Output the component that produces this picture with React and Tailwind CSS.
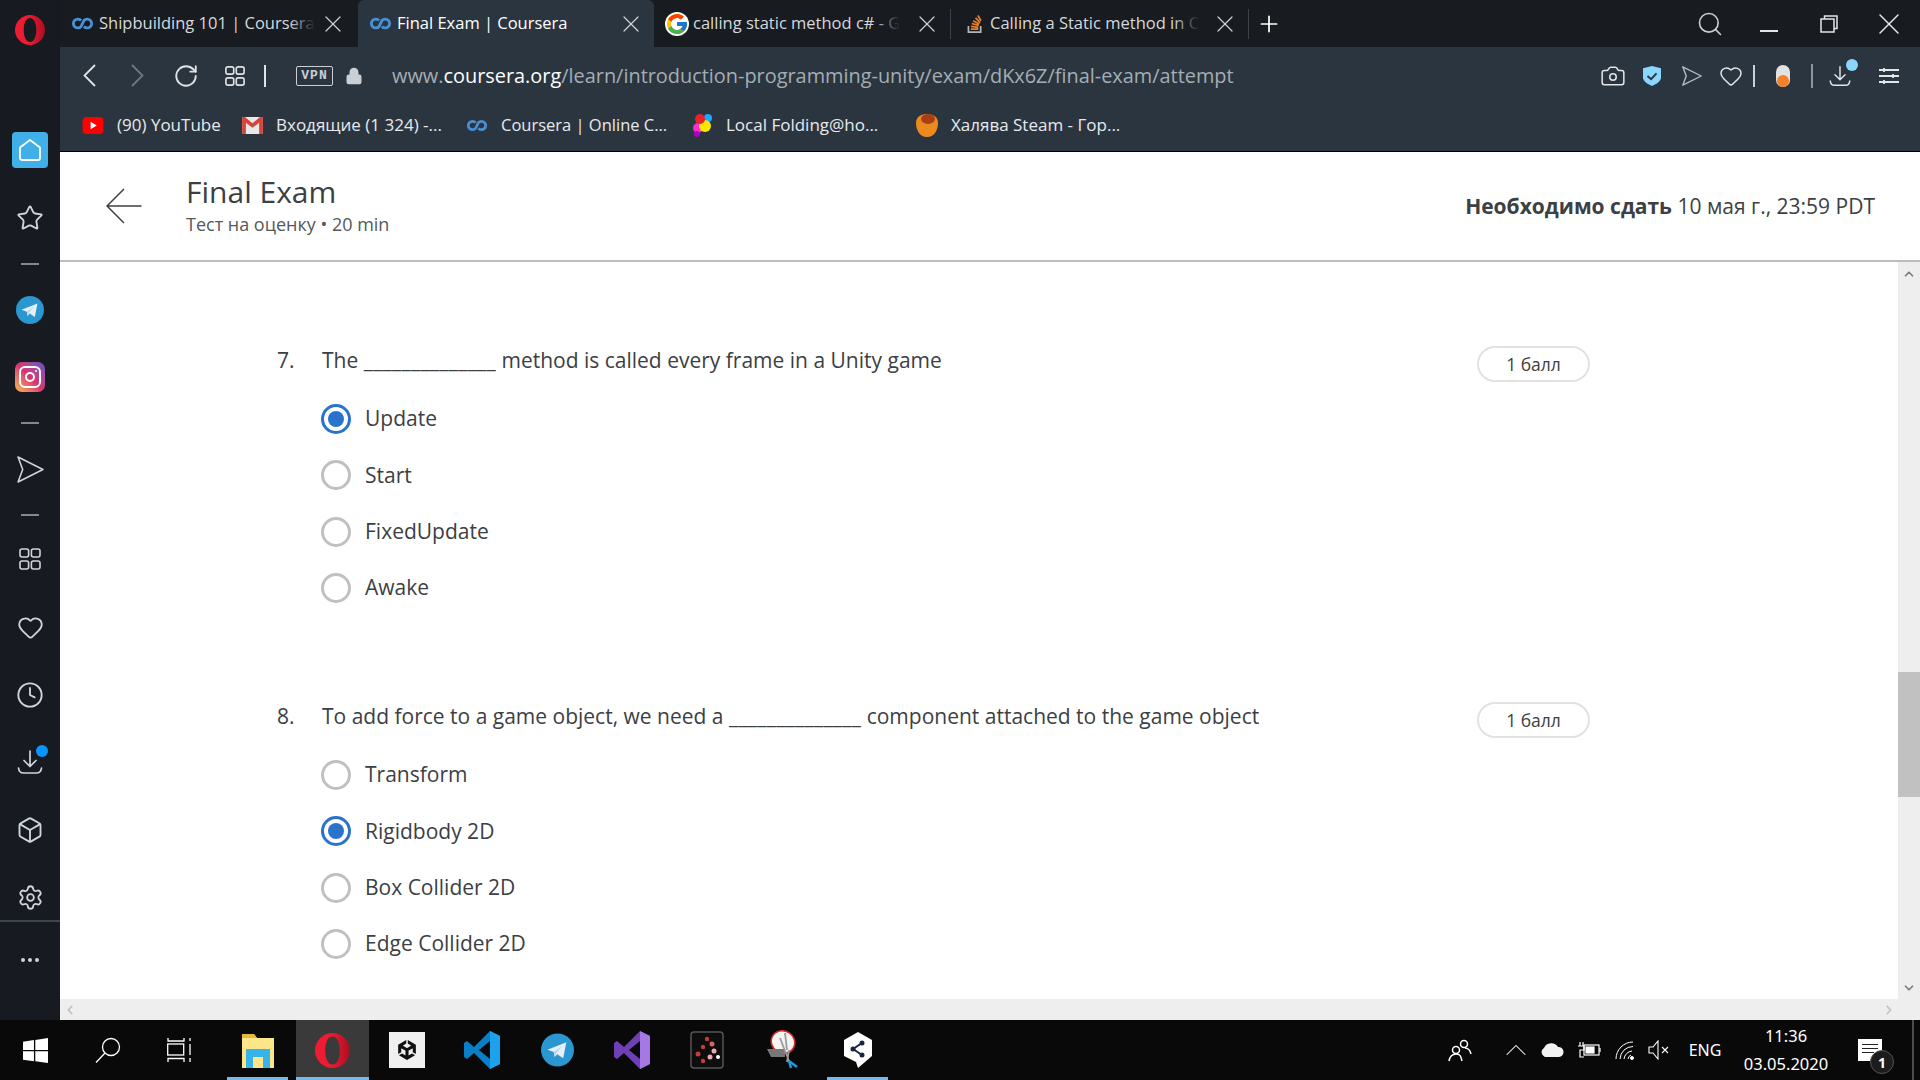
import React from 'react';
import { Search, X, Plus, RotateCw, Lock, Camera, Heart, Settings, Box, Clock, Star, ChevronUp, ChevronDown, ChevronLeft, ChevronRight, MoreHorizontal } from 'lucide-react';
import { FcGoogle } from 'react-icons/fc';
import { SiUnity } from 'react-icons/si';

const Co = ({ className }) => (
  <svg viewBox="0 0 24 13" className={className} fill="none" stroke="#4b8fd3" strokeWidth="3">
    <path d="M10.5 3.4A4.6 4.6 0 1 0 10.5 9.6L13.5 3.4A4.6 4.6 0 1 1 13.5 9.6" />
  </svg>
);
const GridIcon = ({ className, sw = 1.6 }) => (
  <svg viewBox="0 0 22 22" className={className} fill="none" stroke="currentColor" strokeWidth={sw}>
    <rect x="1" y="1" width="8.6" height="8" rx="2" /><rect x="12.4" y="1" width="8.6" height="8" rx="2" />
    <rect x="1" y="13" width="8.6" height="8" rx="2" /><rect x="12.4" y="13" width="8.6" height="8" rx="2" />
  </svg>
);
const SendIcon = ({ className, sw = 1.5 }) => (
  <svg viewBox="0 0 26 26" className={className} fill="none" stroke="currentColor" strokeWidth={sw} strokeLinejoin="round">
    <path d="M1 1L25 13L1 25L5.5 13Z" />
  </svg>
);
const DownloadTray = ({ className, sw = 1.7 }) => (
  <svg viewBox="0 0 26 26" className={className} fill="none" stroke="currentColor" strokeWidth={sw} strokeLinecap="round" strokeLinejoin="round">
    <path d="M13 2V17M7 11.5L13 17.5L19 11.5M1.5 19C2 23 4 24 6.5 24H19.5C22 24 24 23 24.5 19" />
  </svg>
);
const Opera = ({ className }) => (
  <svg viewBox="0 0 30 30" className={className}>
    <defs><linearGradient id="opera-red" x1="0" x2="1" y1="0" y2="0"><stop offset="0.45" stopColor="#ee1c32" /><stop offset="1" stopColor="#a80f22" /></linearGradient></defs>
    <path fillRule="evenodd" fill="url(#opera-red)" d="M15 0C23 0 30 6.7 30 15S23 30 15 30 0 23.3 0 15 7 0 15 0ZM15 3C11 3 8.7 8.3 8.7 15S11 27 15 27 21.3 21.7 21.3 15 19 3 15 3Z" />
  </svg>
);
const Tg = ({ className }) => (
  <svg viewBox="0 0 28 28" className={className}>
    <circle cx="14" cy="14" r="14" fill="#2a97d0" />
    <path d="M5.5 13.8L21.5 7.5L18.8 21L13.8 17.5L11.5 20L10.8 15.7Z" fill="#e4f1f8" />
    <path d="M10.8 15.7L18 10.5L13 16.5L11.5 20Z" fill="#b5d6e8" />
  </svg>
);
const Close = () => <X className="w-[28px] h-[28px] -mx-[4px] shrink-0 text-[#c9cfd4]" strokeWidth={1.1} />;

const Tab = ({ icon, text, active, className, fade }) => (
  <div className={`flex items-center ${className} ${active ? 'bg-[#2b3540] rounded-t-[6px]' : ''}`}>
    {icon}
    <div className={`whitespace-nowrap flex-1 text-[16.5px] ${active ? 'text-white' : 'text-[#d5d9dd]'}`}>
      <span className="relative inline-block">
        {text}
        {fade && <span className="absolute inset-y-0 right-0 w-[26px] bg-gradient-to-r from-transparent to-[#181b20]" />}
      </span>
    </div>
    <Close />
  </div>
);

const Radio = ({ on }) => (
  <div className={`w-[30px] h-[30px] rounded-full border-[3px] flex items-center justify-center ${on ? 'border-[#2a73cc]' : 'border-[#c0c0c0]'}`}>
    {on && <div className="w-[16px] h-[16px] rounded-full bg-[#2a73cc]" />}
  </div>
);
const Option = ({ on, text }) => (
  <div className="flex items-center h-[56.33px] pl-[44px] gap-[14px] text-[21px] text-[#3c4043]">
    <Radio on={on} /><span>{text}</span>
  </div>
);
const Blank = () => <span className="tracking-[0.25px]">______________</span>;
const Question = ({ n, q, opts, on, className }) => (
  <div className={className}>
    <div className="flex items-center h-[36px] text-[21px] text-[#3c4043]">
      <div className="w-[45px]">{n}.</div>
      <div className="flex-1">{q}</div>
      <div className="w-[113px] h-[36px] mt-[7px] rounded-full border-2 border-[#e2e2e2] flex items-center justify-center text-[17.5px]">1 балл</div>
    </div>
    <div className="mt-[12.5px]">
      {opts.map((o) => <Option key={o} text={o} on={o === on} />)}
    </div>
  </div>
);
const Dash = () => <div className="w-[18px] h-[2px] bg-[#7d8a96]" />;
const Side = ({ className, children }) => <div className={`w-full flex items-center justify-center relative ${className}`}>{children}</div>;

export default function App() {
  return (
    <div className="w-[1920px] h-[1080px] flex flex-col overflow-hidden bg-white" style={{ fontFamily: '"Open Sans", sans-serif' }}>
      <div className="flex h-[1020px]">
        {/* sidebar */}
        <aside className="w-[60px] shrink-0 bg-[#171b21] flex flex-col text-[#cfd6db]">
          <Side className="h-[60px]"><Opera className="w-[30px] h-[30px]" /></Side>
          <Side className="h-[56px]" />
          <Side className="h-[68px]">
            <div className="w-[36px] h-[36px] rounded-[4px] bg-[#41b0e8] flex items-center justify-center">
              <svg viewBox="0 0 24 24" className="w-[24px] h-[24px]" fill="none" stroke="#fff" strokeWidth="1.8" strokeLinejoin="round"><path d="M12 2L22 9.5V20A2 2 0 0 1 20 22H4A2 2 0 0 1 2 20V9.5Z" /></svg>
            </div>
          </Side>
          <Side className="h-[68px]"><Star className="w-[28px] h-[28px]" strokeWidth={1.6} /></Side>
          <Side className="h-[24px]"><Dash /></Side>
          <Side className="h-[68px]"><Tg className="w-[28px] h-[28px]" /></Side>
          <Side className="h-[66px]">
            <div className="w-[30px] h-[30px] rounded-[7px] bg-gradient-to-tr from-[#f5b84a] via-[#d9306f] to-[#5b4bc4] flex items-center justify-center">
              <div className="w-[22px] h-[22px] rounded-[6px] border-2 border-white flex items-center justify-center relative">
                <div className="w-[10px] h-[10px] rounded-full border-2 border-white" />
                <div className="absolute top-[2px] right-[2px] w-[2px] h-[2px] bg-white rounded-full" />
              </div>
            </div>
          </Side>
          <Side className="h-[26px]"><Dash /></Side>
          <Side className="h-[66px]"><SendIcon className="w-[27px] h-[27px]" /></Side>
          <Side className="h-[26px]"><Dash /></Side>
          <Side className="h-[62px]"><GridIcon className="w-[24px] h-[22px]" /></Side>
          <Side className="h-[74px]"><Heart className="w-[27px] h-[27px]" strokeWidth={1.6} /></Side>
          <Side className="h-[62px]"><Clock className="w-[28px] h-[28px]" strokeWidth={1.6} /></Side>
          <Side className="h-[72px]">
            <DownloadTray className="w-[26px] h-[26px]" />
            <div className="absolute top-[19px] left-[36px] w-[12px] h-[12px] rounded-full bg-[#0a94ff]" />
          </Side>
          <Side className="h-[64px]"><Box className="w-[28px] h-[28px]" strokeWidth={1.6} /></Side>
          <Side className="h-[58px] pt-[13px]"><Settings className="w-[27px] h-[27px]" strokeWidth={1.6} /></Side>
          <div className="h-[2px] bg-[#3c4650]" />
          <Side className="h-[76px]"><MoreHorizontal className="w-[24px] h-[24px]" strokeWidth={2} /></Side>
        </aside>

        <div className="flex-1 flex flex-col min-w-0">
          {/* tabs */}
          <div className="h-[47px] bg-[#181b20] flex items-center text-[#d5d9dd]">
            <Tab fade className="h-full w-[298px] pl-[11px] pr-[15px]" text="Shipbuilding 101 | Coursera" icon={<Co className="w-[23px] h-[13px] mr-[5px] shrink-0" />} />
            <Tab active className="h-full w-[296px] pl-[11px] pr-[13px]" text="Final Exam | Coursera" icon={<Co className="w-[23px] h-[13px] mr-[5px] shrink-0" />} />
            <Tab fade className="h-[30px] w-[297px] pl-[11px] pr-[13px] border-r border-[#3c4249]" text="calling static method c# - G" icon={<FcGoogle className="w-[24px] h-[24px] mr-[4px] shrink-0 bg-white rounded-full" />} />
            <Tab fade className="h-[30px] w-[298px] pl-[16px] pr-[13px] border-r border-[#3c4249]" text="Calling a Static method in C" icon={
              <svg viewBox="0 0 18 20" className="w-[17px] h-[20px] mr-[6px] shrink-0" fill="none" strokeWidth="1.8"><path d="M1.5 12V18.5H14.5V12" stroke="#b9b6b2" /><path d="M4 15.5H12M4.3 12.5L12 13.5M5 9.5L12.5 11.5M6.5 6.5L13 10M9 3.5L14 8.5M11.5 1L14.8 6.5" stroke="#e8812c" /></svg>
            } />
            <Plus className="ml-[7px] w-[26px] h-[26px] text-white" strokeWidth={1.6} />
            <div className="flex-1" />
            <Search className="w-[28px] h-[28px] text-[#c9cfd4] mr-[36px]" strokeWidth={1.4} />
            <div className="w-[18px] h-[2px] bg-[#e3e6e8] mt-[14px] mr-[42px]" />
            <svg viewBox="0 0 18 18" className="w-[18px] h-[18px] mr-[33px]" fill="none" stroke="#e3e6e8" strokeWidth="1.5"><rect x="1" y="4" width="13" height="13" /><path d="M4.5 4V1H17V13.5H14" /></svg>
            <X className="w-[36px] h-[36px] text-[#e3e6e8] mr-[13px]" strokeWidth={1} />
          </div>

          {/* toolbar */}
          <div className="h-[105px] shrink-0 bg-[#2b3540] border-b border-black">
            <div className="h-[57px] flex items-center text-[#dfe3e6]">
              <svg viewBox="0 0 13 23" className="ml-[23px] w-[13px] h-[23px]" fill="none" stroke="currentColor" strokeWidth="1.8"><path d="M12 1L1.5 11.5L12 22" /></svg>
              <svg viewBox="0 0 13 23" className="ml-[35px] w-[13px] h-[23px] text-[#6d7780]" fill="none" stroke="currentColor" strokeWidth="1.8"><path d="M1 1L11.5 11.5L1 22" /></svg>
              <RotateCw className="ml-[29px] w-[26px] h-[26px]" strokeWidth={1.7} />
              <GridIcon className="ml-[25px] w-[22px] h-[20px]" sw={1.8} />
              <div className="ml-[18px] w-[2px] h-[22px] bg-[#dfe3e6]" />
              <div className="ml-[30px] w-[37px] h-[20px] border border-[#c9cfd4] rounded-[2px] flex items-center justify-center text-[13px] font-bold tracking-[1px] text-[#c9cfd4]" style={{ fontFamily: '"Liberation Mono", monospace' }}>VPN</div>
              <Lock className="ml-[12px] w-[18px] h-[20px] text-[#c9cfd4] fill-[#c9cfd4]" strokeWidth={2} />
              <div className="ml-[29px] text-[19.9px] text-[#a5adb4] whitespace-nowrap">www.<span className="text-white">coursera.org</span>/learn/introduction-programming-unity/exam/dKx6Z/final-exam/attempt</div>
              <div className="flex-1" />
              <Camera className="w-[26px] h-[26px] mr-[17px] text-[#e3e6e8]" strokeWidth={1.4} />
              <svg viewBox="0 0 20 22" className="w-[18px] h-[22px] mr-[20px]"><path d="M10 0L20 2.5V13C20 17 14 20.5 10 22C6 20.5 0 17 0 13V2.5Z" fill="#8ad6ff" /><path d="M5 11L9 14.5L15 8" fill="none" stroke="#2b3540" strokeWidth="2.2" /></svg>
              <SendIcon className="w-[22px] h-[20px] mr-[16px] text-[#b4bbc1]" sw={1.8} />
              <Heart className="w-[24px] h-[24px] mr-[10px] text-[#e3e6e8]" strokeWidth={1.5} />
              <div className="w-[2px] h-[22px] bg-[#c9cfd4] mr-[21px]" />
              <div className="w-[14px] h-[22px] rounded-full bg-[#e2e2e2] flex items-end justify-center mr-[21px]"><div className="w-[12px] h-[12px] rounded-full bg-[#f58028]" /></div>
              <div className="w-[2px] h-[24px] bg-[#8f979e] mr-[14px]" />
              <div className="relative mr-[26px]">
                <DownloadTray className="w-[22px] h-[22px] m-[2px] text-[#e3e6e8]" />
                <div className="absolute -top-[4px] -right-[5px] w-[12px] h-[12px] rounded-full bg-[#8ad6ff]" />
              </div>
              <svg viewBox="0 0 20 18" className="w-[20px] h-[18px] mr-[21px]" fill="none" stroke="#e3e6e8" strokeWidth="1.8"><path d="M0 3H20M0 9H20M0 15H20" /><path d="M5 1V5M14 7V11M5 13V17" /></svg>
            </div>
            {/* bookmarks */}
            <div className="h-[42px] flex items-center text-[17px] text-[#e7eaec] whitespace-nowrap">
              <svg viewBox="0 0 22 18" className="ml-[22px] w-[22px] h-[17px]"><rect width="22" height="18" rx="4" fill="#f00" /><path d="M8.5 5L15 9L8.5 13Z" fill="#fff" /></svg>
              <span className="ml-[13px] w-[125px]">(90) YouTube</span>
              <svg viewBox="0 0 22 18" className="w-[21px] h-[17px]"><rect width="22" height="18" fill="#e8e8e8" /><path d="M0 0V18H4V6L11 11.5L18 6V18H22V0H19L11 6.5L3 0Z" fill="#d64539" /></svg>
              <span className="ml-[13px] w-[190px]">Входящие (1 324) -...</span>
              <Co className="w-[22px] h-[13px]" />
              <span className="ml-[13px] w-[191px] text-[16.5px]">Coursera | Online C...</span>
              <svg viewBox="0 0 22 24" className="w-[22px] h-[24px]"><circle cx="6" cy="15" r="5" fill="#ff2bd0" /><circle cx="16" cy="5" r="4" fill="#19a8ff" /><circle cx="13" cy="13" r="6" fill="#ffe600" /><circle cx="8" cy="6" r="5" fill="#e8232a" /><circle cx="5" cy="21" r="3" fill="#b000c8" /></svg>
              <span className="ml-[12px] w-[189px]">Local Folding@ho...</span>
              <svg viewBox="0 0 24 24" className="w-[24px] h-[24px]"><path d="M1 10C1 3 7 1 12 1S23 3 23 10C23 16 20 24 12 24S1 16 1 10Z" fill="#ec8a1f" /><ellipse cx="13" cy="6" rx="7" ry="5" fill="#a83f14" /></svg>
              <span className="ml-[12px]">Халява Steam - Гор...</span>
            </div>
          </div>

          {/* page header */}
          <header className="h-[110px] shrink-0 border-b-2 border-[#bdbdbd] flex items-center text-[#3c4043]">
            <svg viewBox="0 0 36 36" className="ml-[46px] w-[36px] h-[36px]" fill="none" stroke="#3c4043" strokeWidth="1.5"><path d="M35.5 18H1M18 1L1 18L18 35" /></svg>
            <div className="ml-[44px]">
              <div className="text-[30px] leading-[36px]">Final Exam</div>
              <div className="text-[18px] leading-[28px] text-[#55585b]">Тест на оценку • 20 min</div>
            </div>
            <div className="flex-1" />
            <div className="mr-[45px] pt-[2px] text-[21px]"><b className="font-bold">Необходимо сдать</b> 10 мая г., 23:59 PDT</div>
          </header>

          {/* scrolling page */}
          <div className="flex-1 flex min-h-0">
            <main className="flex-1 pl-[217px] pr-[308px] pt-[80.5px] overflow-hidden">
              <Question n={7} q={<>The <Blank /> method is called every frame in a Unity game</>} on="Update" opts={['Update', 'Start', 'FixedUpdate', 'Awake']} />
              <Question className="mt-[82px]" n={8} q={<>To add force to a game object, we need a <Blank /> component attached to the game object</>} on="Rigidbody 2D" opts={['Transform', 'Rigidbody 2D', 'Box Collider 2D', 'Edge Collider 2D']} />
            </main>
            <div className="w-[22px] bg-[#eeeeee] flex flex-col text-[#7c7c7c]">
              <ChevronUp className="w-[14px] h-[14px] mx-auto mt-[5px]" strokeWidth={3} />
              <div className="h-[391px]" />
              <div className="h-[125px] bg-[#c1c1c1]" />
              <div className="flex-1" />
              <ChevronDown className="w-[14px] h-[14px] mx-auto mb-[4px]" strokeWidth={3} />
            </div>
          </div>
          <div className="h-[21px] shrink-0 bg-[#eeeeee] flex items-center justify-between px-[3px] text-[#c0c0c0]">
            <ChevronLeft className="w-[14px] h-[14px]" strokeWidth={3} />
            <ChevronRight className="w-[14px] h-[14px] mr-[21px]" strokeWidth={3} />
          </div>
        </div>
      </div>

      {/* taskbar */}
      <footer className="h-[60px] bg-[#090909] flex items-center text-white">
        <div className="w-[70px] h-full flex items-center justify-center">
          <svg viewBox="0 0 24 24" className="w-[25px] h-[25px]" fill="#fff"><path d="M0 3.5L10.5 2V11.5H0ZM11.8 1.8L24 0V11.5H11.8ZM0 12.8H10.5V22.3L0 20.8ZM11.8 12.8H24V24L11.8 22.3Z" /></svg>
        </div>
        <div className="w-[76px] h-full flex items-center justify-center">
          <svg viewBox="0 0 26 26" className="w-[26px] h-[26px]" fill="none" stroke="#fff" strokeWidth="1.3"><circle cx="16" cy="10" r="8.5" /><path d="M10 16L1 25.5" /></svg>
        </div>
        <div className="w-[68px] h-full flex items-center justify-center">
          <svg viewBox="0 0 26 26" className="w-[26px] h-[26px]" fill="none" stroke="#fff" strokeWidth="1.3"><rect x="0.7" y="7" width="16" height="11" /><path d="M1 1V4H17V1M1 25V21.5H17V25M23 1V4M23 7V18M23 21V25" /></svg>
        </div>
        <div className="ml-[13px] w-[61px] h-full flex items-center justify-center border-b-[3px] border-[#76b9ed] pt-[3px]">
          <svg viewBox="0 0 32 36" className="w-[32px] h-[36px]"><path d="M0 2H12L15 6H32V36H0Z" fill="#fde68a" /><path d="M0 2H12L15 6H0Z" fill="#e6b93c" /><path d="M4 17H28V36H21V25H11V36H4Z" fill="#37b3ea" /></svg>
        </div>
        <div className="ml-[8px] w-[73px] h-full flex items-center justify-center bg-[#3a3a3a] border-b-[3px] border-[#76b9ed] pt-[3px]">
          <Opera className="w-[35px] h-[35px]" />
        </div>
        <div className="w-[76px] h-full flex items-center justify-center">
          <div className="w-[36px] h-[36px] bg-[#f0f0f0] flex items-center justify-center">
            <SiUnity className="w-[20px] h-[20px] text-[#111]" />
          </div>
        </div>
        <div className="w-[74px] h-full flex items-center justify-center">
          <svg viewBox="0 0 36 38" className="w-[36px] h-[38px]"><path d="M26 0L36 5V33L26 38L10 22L3 28L0 26V12L3 10L10 16ZM26 10L15 19L26 28Z" fill="#0a7fc8" /><path d="M26 0L36 5V33L26 38Z" fill="#1ba1ee" /></svg>
        </div>
        <div className="w-[76px] h-full flex items-center justify-center"><Tg className="w-[33px] h-[36px]" /></div>
        <div className="w-[74px] h-full flex items-center justify-center">
          <svg viewBox="0 0 36 38" className="w-[36px] h-[38px]"><path d="M26 0L36 5V33L26 38L10 22L3 28L0 26V12L3 10L10 16ZM26 10L15 19L26 28Z" fill="#6f3fb5" /><path d="M26 0L36 5V33L26 38Z" fill="#a678e6" /></svg>
        </div>
        <div className="w-[76px] h-full flex items-center justify-center">
          <svg viewBox="0 0 34 38" className="w-[34px] h-[38px]"><rect x="1" y="1" width="32" height="36" rx="3" fill="#0d0d0d" stroke="#555" strokeWidth="1.5" /><circle cx="17" cy="8" r="2.2" fill="#c53a3a" /><circle cx="22" cy="13" r="2.5" fill="#d9606a" /><circle cx="13" cy="16" r="2.2" fill="#c53a3a" /><circle cx="24" cy="20" r="2.5" fill="#efa9b5" /><circle cx="8" cy="23" r="2.5" fill="#c53a3a" /><circle cx="20" cy="26" r="2.5" fill="#efa9b5" /><circle cx="13" cy="30" r="2.2" fill="#c53a3a" /><circle cx="28" cy="26" r="2" fill="#fff" /></svg>
        </div>
        <div className="w-[74px] h-full flex items-center justify-center">
          <svg viewBox="0 0 34 40" className="w-[34px] h-[40px]"><ellipse cx="18" cy="12" rx="12" ry="11" transform="rotate(30 18 12)" fill="#f4f4f4" stroke="#d92a2a" strokeWidth="1.5" /><path d="M2 19H20V27H6Z" fill="#777" /><path d="M20 3L22 20M15 8L24 31M24 20L22 32" stroke="#9a9a9a" strokeWidth="1.8" fill="none" /><path d="M24 31L26 38M24 31L32 37" stroke="#1f9ae0" strokeWidth="2.5" /></svg>
        </div>
        <div className="ml-[8px] w-[61px] h-full flex items-center justify-center border-b-[3px] border-[#76b9ed] pt-[3px]">
          <svg viewBox="0 0 28 36" className="w-[28px] h-[36px]"><path d="M14 0L28 8V24L14 36L12 30L0 24V8Z" fill="#fff" /><path d="M9 17L18 11M9 17L18 23" stroke="#16263c" strokeWidth="2" /><circle cx="9" cy="17" r="2.5" fill="#16263c" /><circle cx="18" cy="11" r="2.5" fill="#16263c" /><circle cx="18" cy="23" r="2.5" fill="#16263c" /></svg>
        </div>
        <div className="flex-1" />
        <div className="w-[56px] flex justify-center pr-[17px]">
          <svg viewBox="0 0 24 24" className="w-[24px] h-[24px]" fill="none" stroke="#fff" strokeWidth="1.5"><circle cx="16" cy="6" r="3.5" /><circle cx="8" cy="12" r="3.5" /><path d="M1 23C2 18 4 16 8 16S13 18 14 23M17 10C20 10 22 12 23 16" /></svg>
        </div>
        <div className="w-[40px] flex justify-center"><ChevronUp className="w-[36px] h-[36px]" strokeWidth={0.7} /></div>
        <div className="w-[32px] flex justify-center">
          <svg viewBox="0 0 24 14" className="w-[24px] h-[14px]"><path d="M5 14A5 5 0 0 1 4 5A8 8 0 0 1 18 4A5 5 0 0 1 19 14Z" fill="#f2f2f2" /></svg>
        </div>
        <div className="w-[42px] flex justify-center">
          <svg viewBox="0 0 24 16" className="w-[24px] h-[16px]" fill="none" stroke="#fff" strokeWidth="1.2"><rect x="7" y="3" width="15" height="10" /><rect x="9" y="5" width="8" height="6" fill="#fff" /><path d="M23 6V10M3 0V4M6 0V4M1 4H7V8H3V15H7" /></svg>
        </div>
        <div className="w-[30px] flex justify-center">
          <svg viewBox="0 0 20 20" className="w-[20px] h-[20px]" fill="none" stroke="#fff" strokeWidth="1"><path d="M1 19A17 17 0 0 1 18 2M5 19A13 13 0 0 1 18 6.5M9 19A9 9 0 0 1 17 11M13 19A5 5 0 0 1 16 15" /><circle cx="17" cy="18" r="1.5" fill="#fff" /></svg>
        </div>
        <div className="w-[38px] flex justify-center">
          <svg viewBox="0 0 22 20" className="w-[22px] h-[20px]" fill="none" stroke="#fff" strokeWidth="1.1"><path d="M1 7H5L10 1V19L5 13H1ZM14 7L20 13M20 7L14 13" /></svg>
        </div>
        <div className="w-[54px] text-[16px] text-center" style={{ fontFamily: '"Noto Sans", sans-serif' }}>ENG</div>
        <div className="w-[108px] text-center text-[16.5px] leading-[28px]" style={{ fontFamily: '"Noto Sans", sans-serif' }}>
          <div>11:36</div><div>03.05.2020</div>
        </div>
        <div className="w-[60px] flex justify-center">
          <div className="relative w-[24px] h-[22px] bg-white">
            <div className="absolute top-[5px] left-[4px] w-[16px] h-[1px] bg-[#222]" />
            <div className="absolute top-[9px] left-[4px] w-[16px] h-[1px] bg-[#222]" />
            <div className="absolute top-[13px] left-[4px] w-[12px] h-[1px] bg-[#222]" />
            <div className="absolute top-[11px] left-[12px] w-[24px] h-[24px] rounded-full bg-[#1c1c1c] border border-[#555] flex items-center justify-center text-[14px] font-bold">1</div>
          </div>
        </div>
        <div className="ml-[12px] mr-[6px] w-[2px] h-full bg-[#4c4c4c]" />
      </footer>
    </div>
  );
}
